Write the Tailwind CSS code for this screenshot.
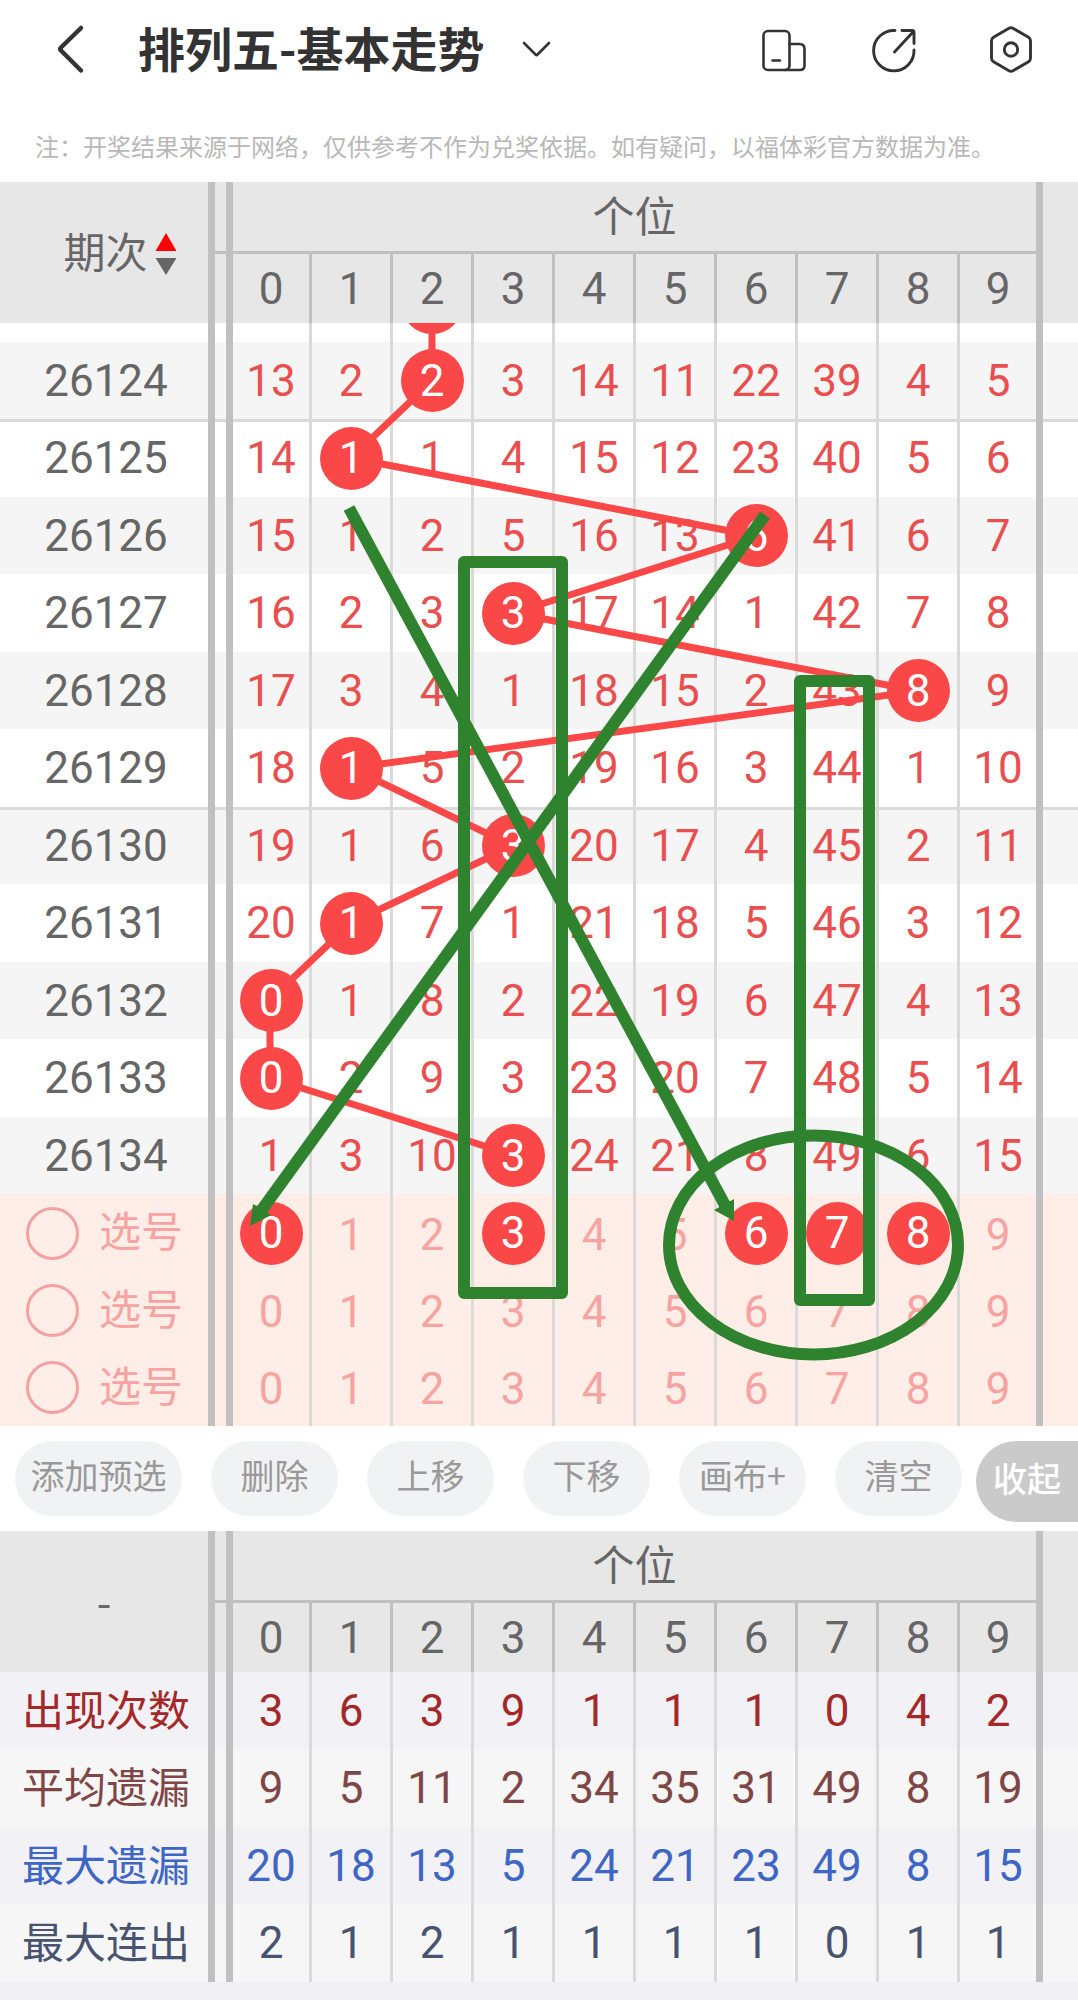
<!DOCTYPE html>
<html lang="zh-CN">
<head>
  <meta charset="UTF-8">
  <meta name="viewport" content="width=device-width, initial-scale=1">
  <title>排列五-基本走势</title>
  <script src="https://cdn.jsdelivr.net/npm/@tailwindcss/browser@4"></script>
</head>

<body class="bg-[#f1f1f5] font-['Roboto','Noto_Sans_CJK_SC',sans-serif] text-[#666]">
  <header class="flex items-center h-[98px] pl-[50px] pr-[36px] bg-white text-[#333]">
    <button type="button" aria-label="返回" class="w-[40px] h-[50px]">
      <svg class="w-[40px] h-[50px]" viewBox="0 0 40 50" fill="none" stroke="currentColor" stroke-width="4.5" stroke-linecap="round" stroke-linejoin="round">
        <path d="M31 4 L11 23.5 Q9.5 25 11 26.5 L31 46.5"/>
      </svg>
    </button>
    <h1 class="ml-[48px] pb-[4px] text-[47px] leading-[56px] font-bold font-['Noto_Sans_CJK_SC',sans-serif] whitespace-nowrap">排列五-基本走势</h1>
    <button type="button" aria-label="切换走势" class="ml-[37px] w-[30px] h-[30px]">
      <svg class="w-[30px] h-[30px]" viewBox="0 0 30 30" fill="none" stroke="currentColor" stroke-width="2.6" stroke-linecap="round" stroke-linejoin="round">
        <path d="M3 9 L14.5 20.5 Q15.5 21.5 16.5 20.5 L28 9"/>
      </svg>
    </button>

    <div class="flex items-center gap-[62px] ml-auto">
      <button type="button" aria-label="横竖屏" class="w-[48px] h-[48px]">
        <svg class="w-[48px] h-[48px]" viewBox="0 0 48 48" fill="none" stroke="currentColor" stroke-width="2.6" stroke-linecap="round" stroke-linejoin="round">
          <rect x="3.5" y="6" width="26" height="39" rx="4.5"/>
          <path d="M29.5 19 H39.5 Q44.5 19 44.5 24 V40.5 Q44.5 45 40 45 H25 M12.5 35.5 H20"/>
        </svg>
      </button>
      <button type="button" aria-label="分享" class="w-[48px] h-[48px]">
        <svg class="w-[48px] h-[48px]" viewBox="0 0 48 48" fill="none" stroke="currentColor" stroke-width="2.9" stroke-linecap="round" stroke-linejoin="round">
          <path d="M44 25 A20.2 20.2 0 1 1 25 5.5"/>
          <path d="M24.5 27 L43.5 6.5 M32 5.5 H42 Q44 5.5 44 7.5 V18.5"/>
        </svg>
      </button>
      <button type="button" aria-label="设置" class="w-[62px] h-[48px]">
        <svg class="w-[62px] h-[48px]" viewBox="0 0 62 48" fill="none" stroke="currentColor" stroke-width="2.9" stroke-linejoin="round">
          <path d="M29 3.3 Q31 2.2 33 3.3 L48.5 12.3 Q50.5 13.5 50.5 16 V33 Q50.5 35.5 48.5 36.7 L33 45.7 Q31 46.8 29 45.7 L13.5 36.7 Q11.5 35.5 11.5 33 V16 Q11.5 13.5 13.5 12.3 Z"/>
          <circle cx="31" cy="24.5" r="6.7"/>
        </svg>
      </button>
    </div>
  </header>

  <p class="pt-[30px] pb-[18px] pl-[35px] bg-white text-[24px] leading-[36px] text-[#b8b8b8] font-['Noto_Sans_CJK_SC',sans-serif]">注：开奖结果来源于网络，仅供参考不作为兑奖依据。如有疑问，以福体彩官方数据为准。</p>

  <main>
    <section class="relative overflow-hidden">
      <table class="w-full table-fixed border-separate border-spacing-0 text-center text-[44px] leading-none bg-white">
        <colgroup>
          <col class="w-[215px]"><col class="w-[18px]"><col class="w-[79px]">
          <col class="w-[81px]" span="8"><col class="w-[83px]"><col>
        </colgroup>
        <thead id="trend-head" class="bg-[#e7e7e7]"></thead>
        <tbody id="trend-body"></tbody>
      </table>

      <!-- trend line, runs under the drawn balls -->
      <svg class="absolute left-0 top-[141px] z-10 w-[1078px] h-[1103px] pointer-events-none" fill="none" aria-hidden="true">
        <circle cx="432" cy="-20" r="31" fill="#fa4848"/>
        <polyline stroke="#fa4848" stroke-width="7" points="432,-20 432,58 351,135 756,213 513,290 918,368 351,445 513,523 351,600 270,677 270,755 513,832"/>
      </svg>

      <!-- hand-drawn marks on the canvas -->
      <svg class="absolute left-0 top-[141px] z-30 w-[1078px] h-[1103px] pointer-events-none" fill="none" stroke="#2f832e" stroke-width="12" aria-hidden="true">
        <rect x="464" y="239" width="98" height="731" stroke-linejoin="round"/>
        <rect x="800" y="358" width="69" height="619" stroke-linejoin="round"/>
        <ellipse cx="813.5" cy="922" rx="144.5" ry="109.5"/>
        <path d="M349 185 L726 884 M765 192 L261 888"/>
        <path fill="#2f832e" stroke="none" d="M734 898 L714 887 L734 876 Z M250 903 L253 881 L271 892 Z"/>
      </svg>
    </section>

    <div class="flex items-start gap-[14px] h-[105px] pt-[15px] pl-[15px] bg-white text-[34px] leading-none text-[#999] whitespace-nowrap font-['Noto_Sans_CJK_SC',sans-serif]">
      <div class="flex gap-[29px]">
        <button type="button" class="w-[167px] h-[75px] pb-[8px] rounded-full bg-[#f1f2f4]">添加预选</button>
        <button type="button" class="w-[127px] h-[75px] pb-[8px] rounded-full bg-[#f1f2f4]">删除</button>
        <button type="button" class="w-[127px] h-[75px] pb-[8px] rounded-full bg-[#f1f2f4]">上移</button>
        <button type="button" class="w-[127px] h-[75px] pb-[8px] rounded-full bg-[#f1f2f4]">下移</button>
        <button type="button" class="w-[127px] h-[75px] pb-[8px] rounded-full bg-[#f1f2f4]">画布+</button>
        <button type="button" class="w-[127px] h-[75px] pb-[8px] rounded-full bg-[#f1f2f4]">清空</button>
      </div>
      <button type="button" class="grow h-[81px] pb-[8px] rounded-l-full bg-[#cacaca] text-white font-medium">收起</button>
    </div>

    <section>
      <table class="w-full table-fixed border-separate border-spacing-0 text-center text-[44px] leading-none">
        <colgroup>
          <col class="w-[215px]"><col class="w-[18px]"><col class="w-[79px]">
          <col class="w-[81px]" span="8"><col class="w-[83px]"><col>
        </colgroup>
        <thead id="stats-head" class="bg-[#e7e7e7]"></thead>
        <tbody id="stats-body"></tbody>
      </table>
    </section>
  </main>

  <script>
    const digits = [0, 1, 2, 3, 4, 5, 6, 7, 8, 9]

    // issue, number drawn, omissions per digit
    const draws = [
      ["26124", 2, [13, 2, 2, 3, 14, 11, 22, 39, 4, 5]],
      ["26125", 1, [14, 1, 1, 4, 15, 12, 23, 40, 5, 6]],
      ["26126", 6, [15, 1, 2, 5, 16, 13, 6, 41, 6, 7]],
      ["26127", 3, [16, 2, 3, 3, 17, 14, 1, 42, 7, 8]],
      ["26128", 8, [17, 3, 4, 1, 18, 15, 2, 43, 8, 9]],
      ["26129", 1, [18, 1, 5, 2, 19, 16, 3, 44, 1, 10]],
      ["26130", 3, [19, 1, 6, 3, 20, 17, 4, 45, 2, 11]],
      ["26131", 1, [20, 1, 7, 1, 21, 18, 5, 46, 3, 12]],
      ["26132", 0, [0, 1, 8, 2, 22, 19, 6, 47, 4, 13]],
      ["26133", 0, [0, 2, 9, 3, 23, 20, 7, 48, 5, 14]],
      ["26134", 3, [1, 3, 10, 3, 24, 21, 8, 49, 6, 15]]
    ]
    const picks = [[0, 3, 6, 7, 8], [], []]
    const stats = [
      ["出现次数", "bg-[#f1f1f6] text-[#a52828]", [3, 6, 3, 9, 1, 1, 1, 0, 4, 2]],
      ["平均遗漏", "bg-[#f6f6f6] text-[#804646]", [9, 5, 11, 2, 34, 35, 31, 49, 8, 19]],
      ["最大遗漏", "bg-[#f1f1f6] text-[#3e66c4]", [20, 18, 13, 5, 24, 21, 23, 49, 8, 15]],
      ["最大连出", "bg-[#f6f6f6] text-[#475370]", [2, 1, 2, 1, 1, 1, 1, 0, 1, 1]]
    ]

    const bar = "border-r-[7px] border-[#c0c0c0]"
    const thin = "p-0 border-r-[3px] border-[#dadada]"
    const ball = "relative z-20 inline-flex items-center justify-center align-middle w-[63px] h-[63px] rounded-full bg-[#fa4848] text-white"

    const head = first => `
      <tr class="h-[72px]">
        <th rowspan="2" class="${bar} p-0 font-normal text-[42px]">${first}</th>
        <td class="${bar} p-0 shadow-[inset_0_-3px_#c0c0c0]"></td>
        <th colspan="10" class="${bar} p-0 font-normal text-[42px] shadow-[inset_0_-3px_#c0c0c0]">个位</th>
        <td rowspan="2"></td>
      </tr>
      <tr class="h-[69px]">
        <td class="${bar} p-0"></td>
        ${digits.map(d => `<th class="${d === 9 ? bar : "border-r-[3px] border-[#c0c0c0]"} p-0 font-normal">${d}</th>`).join("")}
      </tr>`

    const row = (cls, line, label, cells) => `
      <tr class="${cls}">
        <th class="${bar} ${line} py-0 pr-0 pl-[4px] font-normal">${label}</th>
        <td class="${bar} ${line} p-0"></td>
        ${cells.map((c, d) => `<td class="${d === 9 ? bar : thin} ${line} p-0">${c}</td>`).join("")}
        <td class="p-0 ${line}"></td>
      </tr>`

    document.getElementById("trend-head").innerHTML = head(`
      <button type="button" class="inline-flex items-center gap-[7px] pl-[32px] align-middle">
        期次
        <svg class="w-[22px] h-[42px]" viewBox="0 0 22 42" aria-hidden="true">
          <path fill="#f00" d="M11 0 L21.5 18 H0.5 Z"/>
          <path fill="#666" d="M11 42 L21.5 25 H0.5 Z"/>
        </svg>
      </button>`)

    document.getElementById("trend-body").innerHTML =
      row("h-[19px]", "", "", digits.map(() => "")) +
      draws.map(([issue, hit, nums], i) => row(
        (i % 2 ? "h-[78px] bg-white" : "h-[77px] bg-[#f5f5f5]") + " text-[#e94f4f]",
        i % 5 === 1 ? "shadow-[inset_0_3px_#dadada]" : "",
        `<span class="text-[#666]">${issue}</span>`,
        nums.map((n, d) => d === hit ? `<span class="${ball}">${n}</span>` : n)
      )).join("") +
      picks.map((picked, i) => row(
        (i === 0 ? "h-[78px]" : "h-[77px]") + " bg-[#ffeee7] text-[#f7a3a1]",
        "",
        `<label class="flex items-center gap-[20px] pl-[22px] text-[42px]">
          <input type="checkbox" class="appearance-none w-[53px] h-[53px] rounded-full border-[3px] border-[#f4a1a1]">
          选号
        </label>`,
        digits.map(d => picked.includes(d)
          ? `<button type="button" class="${ball}">${d}</button>`
          : `<button type="button" class="w-full align-middle">${d}</button>`)
      )).join("")

    document.getElementById("stats-head").innerHTML = head(`<span class="font-['Noto_Sans_CJK_SC',sans-serif]">-</span>`)
    document.getElementById("stats-body").innerHTML = stats.map(([name, cls, nums], i) =>
      row((i % 2 ? "h-[78px] " : "h-[77px] ") + cls, "", `<span class="text-[42px]">${name}</span>`, nums)
    ).join("")
  </script>
</body>
</html>
